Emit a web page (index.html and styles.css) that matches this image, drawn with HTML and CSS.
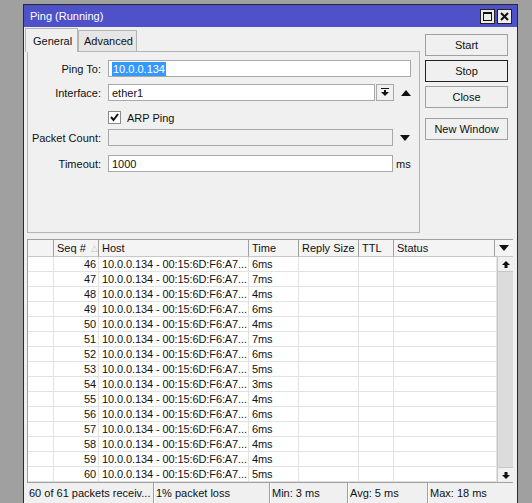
FILE: index.html
```html
<!DOCTYPE html>
<html lang="en">
<head>
  <meta charset="UTF-8" />
  <title>Ping (Running)</title>
  <link rel="stylesheet" href="styles.css">
</head>
<body>
  <div class="window">
    <div class="titlebar">
      <span class="title">Ping (Running)</span>
      <div class="tb-btns">
        <span class="tb-btn"><span class="max-box"></span></span>
        <span class="tb-btn">
          <svg width="9" height="9" viewBox="0 0 9 9"><path d="M1 1 L8 8 M8 1 L1 8" stroke="#111" stroke-width="2"/></svg>
        </span>
      </div>
    </div>

    <div class="content">
      <div class="top">
        <div class="tabs-area">
          <div class="tabs">
            <span class="tab active">General</span>
            <span class="tab">Advanced</span>
          </div>
          <div class="panel">
            <div class="row r1">
              <span class="label">Ping To:</span>
              <span class="field w-long"><span class="sel">10.0.0.134</span></span>
            </div>
            <div class="row r2">
              <span class="label">Interface:</span>
              <span class="field w-iface">ether1</span>
              <span class="drop">
                <svg width="8" height="9" viewBox="0 0 8 9"><rect x="0" y="0" width="8" height="1" fill="#111"/><rect x="3" y="2" width="2" height="3" fill="#111"/><polygon points="0,4 8,4 4,8" fill="#111"/></svg>
              </span>
              <svg class="tri" width="10" height="6" viewBox="0 0 10 6"><polygon points="0,6 10,6 5,0" fill="#111"/></svg>
            </div>
            <div class="row r3">
              <span class="label"></span>
              <span class="check">
                <svg width="9" height="9" viewBox="0 0 9 9"><polyline points="1,4 3.5,7 8,1" fill="none" stroke="#111" stroke-width="2"/></svg>
              </span>
              <span class="check-label">ARP Ping</span>
            </div>
            <div class="row r4">
              <span class="label">Packet Count:</span>
              <span class="field w-mid disabled"></span>
              <svg class="tri" width="10" height="6" viewBox="0 0 10 6"><polygon points="0,0 10,0 5,6" fill="#111"/></svg>
            </div>
            <div class="row r5">
              <span class="label">Timeout:</span>
              <span class="field w-mid">1000</span>
              <span class="unit">ms</span>
            </div>
          </div>
        </div>

        <div class="buttons">
          <span class="btn">Start</span>
          <span class="btn default">Stop</span>
          <span class="btn">Close</span>
          <span class="btn new">New Window</span>
        </div>
      </div>

      <div class="table">
        <div class="thead">
          <span class="th"></span>
          <span class="th">Seq # <span class="sort">&#9651;</span></span>
          <span class="th">Host</span>
          <span class="th">Time</span>
          <span class="th">Reply Size</span>
          <span class="th">TTL</span>
          <span class="th">Status</span>
          <span class="th menu">
            <svg width="10" height="6" viewBox="0 0 10 6"><polygon points="0,0 10,0 5,6" fill="#111"/></svg>
          </span>
        </div>
        <div class="tbody">
          <div class="rows">
            <div class="tr"><span></span><span class="seq">46</span><span>10.0.0.134 - 00:15:6D:F6:A7...</span><span>6ms</span><span></span><span></span><span></span></div>
            <div class="tr"><span></span><span class="seq">47</span><span>10.0.0.134 - 00:15:6D:F6:A7...</span><span>7ms</span><span></span><span></span><span></span></div>
            <div class="tr"><span></span><span class="seq">48</span><span>10.0.0.134 - 00:15:6D:F6:A7...</span><span>4ms</span><span></span><span></span><span></span></div>
            <div class="tr"><span></span><span class="seq">49</span><span>10.0.0.134 - 00:15:6D:F6:A7...</span><span>6ms</span><span></span><span></span><span></span></div>
            <div class="tr"><span></span><span class="seq">50</span><span>10.0.0.134 - 00:15:6D:F6:A7...</span><span>4ms</span><span></span><span></span><span></span></div>
            <div class="tr"><span></span><span class="seq">51</span><span>10.0.0.134 - 00:15:6D:F6:A7...</span><span>7ms</span><span></span><span></span><span></span></div>
            <div class="tr"><span></span><span class="seq">52</span><span>10.0.0.134 - 00:15:6D:F6:A7...</span><span>6ms</span><span></span><span></span><span></span></div>
            <div class="tr"><span></span><span class="seq">53</span><span>10.0.0.134 - 00:15:6D:F6:A7...</span><span>5ms</span><span></span><span></span><span></span></div>
            <div class="tr"><span></span><span class="seq">54</span><span>10.0.0.134 - 00:15:6D:F6:A7...</span><span>3ms</span><span></span><span></span><span></span></div>
            <div class="tr"><span></span><span class="seq">55</span><span>10.0.0.134 - 00:15:6D:F6:A7...</span><span>4ms</span><span></span><span></span><span></span></div>
            <div class="tr"><span></span><span class="seq">56</span><span>10.0.0.134 - 00:15:6D:F6:A7...</span><span>6ms</span><span></span><span></span><span></span></div>
            <div class="tr"><span></span><span class="seq">57</span><span>10.0.0.134 - 00:15:6D:F6:A7...</span><span>6ms</span><span></span><span></span><span></span></div>
            <div class="tr"><span></span><span class="seq">58</span><span>10.0.0.134 - 00:15:6D:F6:A7...</span><span>4ms</span><span></span><span></span><span></span></div>
            <div class="tr"><span></span><span class="seq">59</span><span>10.0.0.134 - 00:15:6D:F6:A7...</span><span>4ms</span><span></span><span></span><span></span></div>
            <div class="tr"><span></span><span class="seq">60</span><span>10.0.0.134 - 00:15:6D:F6:A7...</span><span>5ms</span><span></span><span></span><span></span></div>
          </div>
          <div class="scroll">
            <span class="sb-btn">
              <svg width="8" height="7" viewBox="0 0 8 7"><polygon points="4,0 8,4 5.5,4 5.5,7 2.5,7 2.5,4 0,4" fill="#111"/></svg>
            </span>
            <span class="sb-track"></span>
            <span class="sb-btn">
              <svg width="8" height="7" viewBox="0 0 8 7"><polygon points="4,7 8,3 5.5,3 5.5,0 2.5,0 2.5,3 0,3" fill="#111"/></svg>
            </span>
          </div>
        </div>
      </div>

      <div class="statusbar">
        <span class="cell c1">60 of 61 packets receiv...</span>
        <span class="cell c2">1% packet loss</span>
        <span class="cell c3">Min: 3 ms</span>
        <span class="cell c4">Avg: 5 ms</span>
        <span class="cell c5">Max: 18 ms</span>
      </div>
    </div>
  </div>
</body>
</html>
```

FILE: styles.css
```css
html, body {
  height: 503px;
  overflow: hidden;
}
body {
  margin: 0;
  background: #a0a0a0;
  font-family: "Liberation Sans", Arial, sans-serif;
  font-size: 11px;
  color: #111;
}
.window {
  margin: 4px 0 0 23px;
  width: 495px;
  height: 520px;
  box-sizing: border-box;
  border: 1px solid #2a2a2a;
  background: #f0f0f0;
}
.titlebar {
  height: 22px;
  background: #4f51c9;
  color: #fff;
  display: flex;
  align-items: center;
  padding-left: 6px;
}
.tb-btns {
  margin-left: auto;
  margin-right: 5px;
  display: flex;
  gap: 2px;
}
.tb-btn {
  width: 15px;
  height: 15px;
  box-sizing: border-box;
  border: 1px solid #222;
  background: #ececec;
  display: flex;
  align-items: center;
  justify-content: center;
}
.max-box {
  width: 9px;
  height: 9px;
  box-sizing: border-box;
  border: 1px solid #111;
  border-top-width: 2px;
}
.content {
  padding: 0 3px;
}
.top {
  display: flex;
  gap: 5px;
}
.tabs-area {
  width: 393px;
}
.tabs {
  height: 24px;
  display: flex;
  align-items: flex-end;
  margin-left: -2px;
}
.tab {
  width: 59px;
  height: 21px;
  box-sizing: border-box;
  border: 1px solid #b4b4b4;
  border-bottom: none;
  background: #e6e6e6;
  padding-left: 5px;
  display: flex;
  align-items: center;
}
.tab.active {
  width: 53px;
  height: 24px;
  margin-bottom: -1px;
  padding-left: 7px;
  background: #f0f0f0;
  position: relative;
  z-index: 1;
}
.panel {
  height: 182px;
  box-sizing: border-box;
  border: 1px solid #b4b4b4;
  padding-top: 1px;
}
.row {
  display: flex;
  align-items: center;
  height: 17px;
}
.r1 { margin-top: 7px; }
.r2 { margin-top: 7px; }
.r3 { margin-top: 8px; }
.r4 { margin-top: 3px; }
.r5 { margin-top: 9px; }
.label {
  width: 73px;
  margin-right: 7px;
  text-align: right;
}
.field {
  height: 17px;
  box-sizing: border-box;
  border: 1px solid #a8a8a8;
  background: #fff;
  padding-left: 3px;
  display: flex;
  align-items: center;
}
.field.disabled {
  background: #f0f0f0;
}
.w-long { width: 303px; }
.w-iface { width: 267px; }
.w-mid { width: 285px; }
.sel {
  background: #3399ff;
  color: #fff;
  padding: 0 1px;
  line-height: 14px;
}
.drop {
  width: 18px;
  height: 17px;
  box-sizing: border-box;
  border: 1px solid #a8a8a8;
  margin-left: 1px;
  display: flex;
  align-items: center;
  justify-content: center;
}
.tri {
  margin-left: 7px;
}
.check {
  width: 13px;
  height: 13px;
  box-sizing: border-box;
  border: 1px solid #8a8a8a;
  background: #fff;
  display: flex;
  align-items: center;
  justify-content: center;
}
.check-label {
  margin-left: 6px;
}
.unit {
  margin-left: 3px;
}
.buttons {
  width: 83px;
  padding-top: 7px;
  display: flex;
  flex-direction: column;
  gap: 4px;
}
.btn {
  height: 22px;
  box-sizing: border-box;
  border: 1px solid #a0a0a0;
  background: #f0f0f0;
  display: flex;
  align-items: center;
  justify-content: center;
}
.btn.default {
  border-color: #222;
}
.btn.new {
  margin-top: 6px;
}
.table {
  margin-top: 6px;
  width: 486px;
  box-sizing: border-box;
  border-left: 1px solid #a0a0a0;
  border-top: 1px solid #a0a0a0;
}
.thead {
  height: 17px;
  display: grid;
  grid-template-columns: 26px 45px 150px 50px 60px 35px 101px 18px;
  background: #f4f4f4;
}
.th {
  border-right: 1px solid #a0a0a0;
  border-bottom: 1px solid #c8c8c8;
  padding-left: 3px;
  display: flex;
  align-items: center;
  white-space: nowrap;
}
.sort {
  color: #c0c0c0;
  font-size: 9px;
  margin-left: 5px;
}
.th.menu {
  border-right: none;
  justify-content: center;
  padding-left: 0;
}
.tbody {
  display: flex;
}
.rows {
  width: 469px;
  background: #fff;
}
.tr {
  height: 15px;
  box-sizing: border-box;
  display: grid;
  grid-template-columns: 26px 45px 150px 50px 60px 35px 103px;
  border-bottom: 1px solid #e2e2e2;
}
.tr span {
  border-right: 1px solid #e2e2e2;
  padding-left: 3px;
  line-height: 14px;
  white-space: nowrap;
  overflow: hidden;
  letter-spacing: -0.1px;
}
.tr .seq {
  text-align: right;
  padding: 0 2px 0 0;
}
.scroll {
  width: 16px;
  display: flex;
  flex-direction: column;
  border-left: 1px solid #c8c8c8;
  box-sizing: border-box;
  background: #dcdcdc;
}
.sb-btn {
  height: 15px;
  background: #f0f0f0;
  border-bottom: 1px solid #c8c8c8;
  box-sizing: border-box;
  display: flex;
  align-items: center;
  justify-content: center;
}
.sb-btn:last-child {
  border-bottom: none;
  border-top: 1px solid #c8c8c8;
}
.sb-track {
  flex: 1;
}
.statusbar {
  height: 21px;
  width: 486px;
  display: flex;
  border-top: 1px solid #a0a0a0;
  box-sizing: border-box;
}
.cell {
  box-sizing: border-box;
  padding-left: 2px;
  display: flex;
  align-items: center;
  border-right: 1px solid #a0a0a0;
  box-shadow: 1px 0 0 #fff;
  white-space: nowrap;
}
.c1 { width: 127px; }
.c2 { width: 116px; }
.c3 { width: 78px; }
.c4 { width: 80px; }
.c5 { width: 85px; border-right: none; box-shadow: none; }
```
